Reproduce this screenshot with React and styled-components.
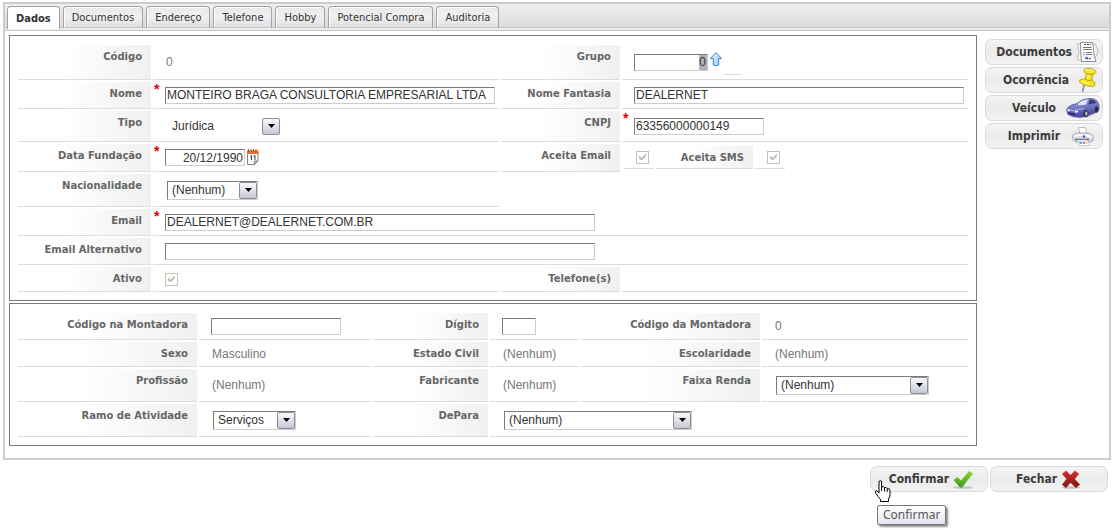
import React, { useState } from "react";
import styled, { createGlobalStyle } from "styled-components";

const GlobalStyle = createGlobalStyle`
  * {
    box-sizing: border-box;
  }
  body {
    margin: 0;
    background-color: white;
    font-family: "Liberation Sans", Arial, sans-serif;
    font-size: 12px;
    color: #333;
  }
`;

const Page = styled.main`
  padding: 2px 2px 38px 3px;
`;

const Window = styled.div`
  border: 2px solid #ccc;
`;

const TabBar = styled.nav`
  display: flex;
  align-items: flex-start;
  gap: 3px;
  height: 27px;
  padding: 2px;
  background: linear-gradient(#efefef, #dadada 23px, #c6c6c6 23px, #c6c6c6 24px, #ececec 24px);
  border-bottom: 1px solid #c6c6c6;
`;

const Tab = styled.button`
  height: ${(props) => (props.$active ? 23 : 22)}px;
  padding: 0 8px;
  border: 1px solid #a2a2a2;
  border-bottom: ${(props) => (props.$active ? "none" : "1px solid #c6c6c6")};
  border-radius: 4px 4px 0 0;
  background: ${(props) =>
    props.$active ? "white" : "linear-gradient(#e9e9e9, #f0f0f0 50%, #e0e0e0)"};
  box-shadow: inset 1px 1px 0 white;
  font-family: "DejaVu Sans Condensed", "DejaVu Sans", sans-serif;
  font-size: 11px;
  font-weight: ${(props) => (props.$active ? "bold" : "normal")};
  color: #333;
  white-space: nowrap;
  cursor: pointer;
`;

const Content = styled.div`
  display: flex;
  gap: 8px;
  padding: 4px 6px 12px 4px;
`;

const Panels = styled.form`
  flex: 1;
  min-width: 0;
  display: flex;
  flex-direction: column;
  gap: 2px;
`;

const Panel = styled.section`
  display: grid;
  grid-template-columns: ${(props) => props.$columns};
  grid-template-rows: ${(props) => props.$rows};
  gap: 2px;
  padding: 9px 8px 8px;
  border: 1px solid #7b7b7b;
`;

const Label = styled.label`
  padding: 5px 9px 0 0;
  border-bottom: 1px solid #dcdcdc;
  background: linear-gradient(to right, white 35%, #f0f0f0);
  font-family: "DejaVu Sans", Verdana, sans-serif;
  font-size: 10px;
  font-weight: bold;
  line-height: 14px;
  text-align: right;
  color: #666;
  white-space: nowrap;
`;

const Value = styled.div`
  display: flex;
  align-items: center;
  grid-column: span ${(props) => props.$span || 1};
  min-width: 0;
  padding-left: ${(props) => (props.$required ? 0 : 12)}px;
  border-bottom: 1px solid #dcdcdc;
`;

const Star = styled.span`
  align-self: flex-start;
  width: 12px;
  padding-left: 1px;
  font-size: 14px;
  font-weight: bold;
  line-height: 14px;
  color: #e00000;
`;

const Blank = styled.div`
  grid-column: span 2;
`;

const ReadOnly = styled.output`
  padding-left: 1px;
  color: #777;
`;

const TextInput = styled.input`
  width: ${(props) => props.$width}px;
  max-width: 100%;
  height: 17px;
  padding: 0 1px;
  border: 1px solid #ccc;
  border-top-color: #7b7b7b;
  border-left-color: #7b7b7b;
  border-radius: 0;
  outline: none;
  background: white;
  font-family: inherit;
  font-size: 12px;
  color: #333;
  text-align: ${(props) => props.$align || "left"};
`;

const GroupInput = styled(TextInput)`
  background: linear-gradient(#b1b1bf, #b1b1bf) right center / 8px 15px no-repeat white;
`;

const SelectBox = styled.span`
  display: grid;
  grid-template-columns: 1fr 18px;
  align-items: center;
  width: ${(props) => props.$width}px;
  height: 19px;
  margin-left: 2px;
  border: 1px solid ${(props) => (props.$plain ? "transparent" : "#ccc")};
  border-top-color: ${(props) => (props.$plain ? "transparent" : "#7b7b7b")};
  border-left-color: ${(props) => (props.$plain ? "transparent" : "#7b7b7b")};
`;

const NativeSelect = styled.select`
  grid-area: 1 / 1 / 2 / 3;
  height: 17px;
  padding: 0 18px 0 4px;
  border: none;
  outline: none;
  appearance: none;
  background: transparent;
  font-family: inherit;
  font-size: 12px;
  color: #333;
`;

const ArrowBox = styled.span`
  grid-area: 1 / 2 / 2 / 3;
  display: flex;
  justify-content: center;
  align-items: center;
  height: 17px;
  border: 1px solid #8d8d93;
  border-radius: 2px;
  background: linear-gradient(#fafafc, #c5c7d6);
  pointer-events: none;
`;

const Check = styled.input`
  display: grid;
  place-content: center;
  width: 13px;
  height: 13px;
  margin: 0;
  border: 1px solid #c5c3b8;
  appearance: none;
  background: white;
  &:checked::after {
    content: "";
    width: 7px;
    height: 7px;
    background-color: #c0beb2;
    clip-path: polygon(0 30%, 38% 62%, 100% 0, 100% 40%, 38% 100%, 0 70%);
  }
`;

const InnerCells = styled.div`
  display: grid;
  grid-template-columns: 30px 97px 30px;
  gap: 2px;
  padding: 2px 2px 3px;
`;

const Placeholder = styled.span`
  align-self: flex-end;
  width: 19px;
  height: 1px;
  margin: 0 0 4px 1px;
  background-color: #dcdcdc;
`;

const Sidebar = styled.aside`
  display: flex;
  flex-direction: column;
  gap: 2px;
  width: 118px;
  padding-top: 4px;
`;

const ActionButton = styled.button`
  display: flex;
  justify-content: flex-end;
  align-items: center;
  width: 118px;
  height: 26px;
  padding: 0 2px 0 0;
  border: 1px solid #dadada;
  border-radius: 7px;
  background: linear-gradient(#f5f5f5, #ebebeb 45%, #f2f2f2);
  font-family: "DejaVu Sans Condensed", "DejaVu Sans", sans-serif;
  font-size: 12px;
  font-weight: bold;
  color: #3b3b3b;
  cursor: pointer;
  svg {
    flex: none;
  }
`;

const Footer = styled.footer`
  display: flex;
  justify-content: flex-end;
  gap: 2px;
  padding: 6px 3px 0 0;
`;

const TipAnchor = styled.div`
  position: relative;
`;

const Tooltip = styled.span`
  position: absolute;
  top: 39px;
  left: 7px;
  height: 20px;
  padding: 0 5px;
  border: 1px solid #767676;
  border-radius: 2px;
  background: linear-gradient(white, #e4e5f0);
  box-shadow: 2px 2px 2px rgba(0, 0, 0, 0.45);
  font-family: "Noto Sans", sans-serif;
  font-size: 12px;
  line-height: 18px;
  color: #575757;
`;

const Hand = styled.svg`
  position: absolute;
  top: 14px;
  left: 4px;
  z-index: 1;
`;

const UpArrow = () => (
  <svg width="14" height="22" viewBox="0 0 14 22">
    <defs>
      <linearGradient id="up" x2="1" y2="1">
        <stop offset="0" stopColor="#eaf7ff" />
        <stop offset="1" stopColor="#8cc8f4" />
      </linearGradient>
    </defs>
    <path
      d="M8 1.5 L13.5 7.5 H10.7 V14 Q8 15.5 5.3 14 V7.5 H2.5 Z"
      fill="url(#up)"
      stroke="#3b86cf"
      strokeLinejoin="round"
    />
  </svg>
);

const CalendarIcon = () => (
  <svg width="14" height="17" viewBox="0 0 14 17">
    <path d="M2.5 3 H13 V12 L9.5 15.5 H2.5 Z" fill="#fbfaf8" stroke="#8b8580" />
    <path d="M9.5 15.5 V12 H13 Z" fill="#c9c5c0" stroke="#8b8580" />
    <path d="M2 1.5 H13.5 V5 H2 Z" fill="#e0702c" />
    <path d="M3.5 0 V3 M6 0 V3 M8.5 0 V3 M11 0 V3" stroke="#a8502a" />
    <path d="M5 7.5 L6.5 6.5 V11 M8.500 7.5 L10 6.5 V11" fill="none" stroke="#454545" />
  </svg>
);

const DocumentIcon = () => (
  <svg width="28" height="24" viewBox="0 0 28 24">
    <path d="M9 4 L5.5 3.5 L7 12 L5 19 L9 21 M21 4 L23.500 4.5 L26 11 L23 18" fill="#f6f6f6" stroke="#bcbcbc" />
    <path d="M8.5 2.5 H20.5 Q21.500 6 21.500 11 Q22 17 24 21.5 H9.5 Q8.500 12 8.5 2.5 Z" fill="white" stroke="#8f8f8f" />
    <path d="M12 4.5 H19" stroke="#444" strokeDasharray="2 1" />
    <path d="M11 7.5 H19.5 M11 9.5 H20 M14 12.5 H20 M14 14.5 H20.500" stroke="#777" />
    <path d="M11 12.5 H13 M11 14.5 H13" stroke="#aaa" />
    <path d="M13 18.5 L15 17.5 L16 19.500 M17 18.5 H19" fill="none" stroke="#4a67cc" strokeWidth="1.5" />
  </svg>
);

const PinIcon = () => (
  <svg width="31" height="26" viewBox="0 0 31 26">
    <path d="M15 18 L13.5 25" stroke="#888" strokeWidth="1.5" />
    <path
      d="M14.5 3.5 Q15 1 21 1.5 Q27.5 2.5 27 5.5 Q26 7.5 23.5 7 L23 13 Q27 15.5 26 18 Q24 20.5 17 18.5 Q9.500 16 10.5 13.5 Q12.5 11.5 16 12 L17.5 6.5 Q14.5 5.5 14.5 3.5 Z"
      fill="#f7e51c"
      stroke="#a99a10"
      strokeWidth="0.8"
    />
    <path d="M17.5 6.5 Q20 8 23.5 7 M16 12 Q18.5 14.5 23 13" fill="none" stroke="#b0a112" />
    <path d="M17 3 Q20 2 24 4 M19.5 8 L18.5 12 M13 14 Q16 16 21 17" fill="none" stroke="#fffb9e" />
  </svg>
);

const CarIcon = () => (
  <svg width="44" height="24" viewBox="0 0 44 24">
    <defs>
      <linearGradient id="car" x2="0.3" y2="1">
        <stop offset="0" stopColor="#aab0ea" />
        <stop offset="1" stopColor="#4646a4" />
      </linearGradient>
    </defs>
    <path d="M14 20 Q24 24 33 21 L43 16 L41 13 Z" fill="#c9c9c9" />
    <path
      d="M11 12.5 Q14 8.5 21 7.5 Q26 2.5 33 2.5 Q39 2 41 5 L43 9 V14 Q41 16.5 38 17 L32 19.5 Q25 22.5 17 20.5 L12 18.5 Q10 15 11 12.5 Z"
      fill="url(#car)"
      stroke="#49499b"
      strokeWidth="0.7"
    />
    <path d="M22 7.5 Q27 3.5 32 3.5 L30 8.5 Q26 9.5 22 9 Z" fill="#dfe3f8" />
    <path d="M33.5 3.5 Q38 3 39.5 5.5 L40 7 L32.5 8.5 Z" fill="#3c3f70" />
    <path d="M12 13 L17 15 Q23 13 28 12.5" fill="none" stroke="#bdc2f4" />
    <ellipse cx="30" cy="17.5" rx="2.5" ry="3.5" fill="#2b2b38" />
    <ellipse cx="30.3" cy="17.5" rx="1.3" ry="2.2" fill="#b4b4c0" />
    <ellipse cx="40.5" cy="13.5" rx="1.7" ry="3" fill="#2b2b38" />
    <path d="M12 17 L19 18.5" stroke="#24245f" strokeWidth="1.5" />
    <path d="M11.5 14.5 H13.5 M19 16 L22 15.5" stroke="white" strokeWidth="1.5" />
  </svg>
);

const PrinterIcon = () => (
  <svg width="40" height="24" viewBox="0 0 40 24">
    <path d="M20 10 L18.5 3.5 H25.5 L27 10 Z" fill="white" stroke="#b9bcc6" />
    <path d="M13 11 Q16 8.500 20 9 L29 9 L33 12 V16.5 L30 18 H16 L12.5 15 Z" fill="#d9dbe6" stroke="#a3a6b8" />
    <path d="M14 12 Q22 9.500 32 13" fill="none" stroke="white" strokeWidth="2" />
    <path d="M15 15.5 H29" stroke="#5e6274" strokeWidth="1.5" />
    <circle cx="24" cy="12.5" r="1.2" fill="#3f4ba6" />
    <path d="M17 16 H27 L30 21.5 H19 Z" fill="white" stroke="#bbb" strokeWidth="0.7" />
    <path d="M18.5 17.5 H21.5 L22.5 20 H20 Z" fill="#44b9dd" />
    <path d="M22.5 17.5 H24.5 L25.5 20 H23.5 Z" fill="#dd58b8" />
    <path d="M25.5 17.5 H26.5 L28 20 H26.5 Z" fill="#e8c93a" />
  </svg>
);

const ConfirmIcon = () => (
  <svg width="36" height="24" viewBox="0 0 36 24">
    <defs>
      <linearGradient id="ok" x2="0" y2="1">
        <stop offset="0" stopColor="#8fd63a" />
        <stop offset="1" stopColor="#3c9a18" />
      </linearGradient>
    </defs>
    <ellipse cx="14" cy="20.5" rx="10" ry="1.3" fill="#c4c4c4" />
    <path d="M4.5 13 L8.5 10 L12 13.5 L20 4 L24 6.5 L13 20.5 H11 Z" fill="url(#ok)" />
  </svg>
);

const CloseIcon = () => (
  <svg width="48" height="24" viewBox="0 0 48 24">
    <defs>
      <linearGradient id="no" x2="0" y2="1">
        <stop offset="0" stopColor="#d8322c" />
        <stop offset="1" stopColor="#7e1714" />
      </linearGradient>
    </defs>
    <ellipse cx="14" cy="20.5" rx="9" ry="1.3" fill="#c9c0c0" />
    <path
      d="M5 7 L9 3.5 L13.5 8 L18 3.5 L22 7 L17.8 12 L23 17.5 L19 21 L13.5 15.8 L9 21 L5 17.5 L9.5 12 Z"
      fill="url(#no)"
    />
  </svg>
);

const Select = ({ id, width, value, plain }) => (
  <SelectBox $width={width} $plain={plain}>
    <NativeSelect id={id} defaultValue={value}>
      <option>{value}</option>
    </NativeSelect>
    <ArrowBox>
      <svg width="7" height="4" viewBox="0 0 7 4">
        <path d="M0 0 H7 L3.5 4 Z" fill="black" />
      </svg>
    </ArrowBox>
  </SelectBox>
);

const Field = ({ id, label, required, span, children }) => (
  <>
    <Label htmlFor={id}>{label}</Label>
    <Value $required={required} $span={span}>
      {required && <Star>*</Star>}
      {children}
    </Value>
  </>
);

const tabs = [
  "Dados",
  "Documentos",
  "Endereço",
  "Telefone",
  "Hobby",
  "Potencial Compra",
  "Auditoria",
];

const App = () => {
  const [active, setActive] = useState("Dados");

  return (
    <Page>
      <GlobalStyle />
      <Window>
        <TabBar>
          {tabs.map((tab) => (
            <Tab key={tab} $active={tab === active} onClick={() => setActive(tab)}>
              {tab}
            </Tab>
          ))}
        </TabBar>
        <Content>
          <Panels>
            <Panel
              $columns="133px minmax(0, 1fr) 119px minmax(0, 1fr)"
              $rows="35px 27px 31px 28px 33px 27px 27px 25px"
            >
              <Field id="codigo" label="Código">
                <ReadOnly id="codigo">0</ReadOnly>
              </Field>
              <Field id="grupo" label="Grupo">
                <GroupInput id="grupo" $width={74} $align="right" defaultValue="0" />
                <UpArrow />
                <Placeholder />
              </Field>
              <Field id="nome" label="Nome" required>
                <TextInput
                  id="nome"
                  $width={330}
                  defaultValue="MONTEIRO BRAGA CONSULTORIA EMPRESARIAL LTDA"
                />
              </Field>
              <Field id="fantasia" label="Nome Fantasia">
                <TextInput id="fantasia" $width={330} defaultValue="DEALERNET" />
              </Field>
              <Field id="tipo" label="Tipo">
                <Select id="tipo" width={114} value="Jurídica" plain />
              </Field>
              <Field id="cnpj" label="CNPJ" required>
                <TextInput id="cnpj" $width={130} defaultValue="63356000000149" />
              </Field>
              <Field id="fundacao" label="Data Fundação" required>
                <TextInput id="fundacao" $width={80} $align="right" defaultValue="20/12/1990" />
                <CalendarIcon />
              </Field>
              <Label htmlFor="aceitaEmail">Aceita Email</Label>
              <InnerCells>
                <Value>
                  <Check type="checkbox" id="aceitaEmail" defaultChecked disabled />
                </Value>
                <Label htmlFor="aceitaSms">Aceita SMS</Label>
                <Value>
                  <Check type="checkbox" id="aceitaSms" defaultChecked disabled />
                </Value>
              </InnerCells>
              <Field id="nacionalidade" label="Nacionalidade">
                <Select id="nacionalidade" width={91} value="(Nenhum)" />
              </Field>
              <Blank />
              <Field id="email" label="Email" required span={3}>
                <TextInput id="email" $width={430} defaultValue="DEALERNET@DEALERNET.COM.BR" />
              </Field>
              <Field id="emailAlternativo" label="Email Alternativo" span={3}>
                <TextInput id="emailAlternativo" $width={430} />
              </Field>
              <Field id="ativo" label="Ativo">
                <Check type="checkbox" id="ativo" defaultChecked disabled />
              </Field>
              <Field id="telefones" label="Telefone(s)">
                <ReadOnly id="telefones" />
              </Field>
            </Panel>
            <Panel
              $columns="179px minmax(0, 171fr) 116px minmax(0, 88fr) 180px minmax(0, 206fr)"
              $rows="27px 25px 33px 33px"
            >
              <Field id="codigoNaMontadora" label="Código na Montadora">
                <TextInput id="codigoNaMontadora" $width={130} />
              </Field>
              <Field id="digito" label="Dígito">
                <TextInput id="digito" $width={34} />
              </Field>
              <Field id="codigoDaMontadora" label="Código da Montadora">
                <ReadOnly id="codigoDaMontadora">0</ReadOnly>
              </Field>
              <Field id="sexo" label="Sexo">
                <ReadOnly id="sexo">Masculino</ReadOnly>
              </Field>
              <Field id="estadoCivil" label="Estado Civil">
                <ReadOnly id="estadoCivil">(Nenhum)</ReadOnly>
              </Field>
              <Field id="escolaridade" label="Escolaridade">
                <ReadOnly id="escolaridade">(Nenhum)</ReadOnly>
              </Field>
              <Field id="profissao" label="Profissão">
                <ReadOnly id="profissao">(Nenhum)</ReadOnly>
              </Field>
              <Field id="fabricante" label="Fabricante">
                <ReadOnly id="fabricante">(Nenhum)</ReadOnly>
              </Field>
              <Field id="faixaRenda" label="Faixa Renda">
                <Select id="faixaRenda" width={153} value="(Nenhum)" />
              </Field>
              <Field id="ramo" label="Ramo de Atividade">
                <Select id="ramo" width={83} value="Serviços" />
              </Field>
              <Field id="dePara" label="DePara" span={3}>
                <Select id="dePara" width={188} value="(Nenhum)" />
              </Field>
            </Panel>
          </Panels>
          <Sidebar>
            <ActionButton>
              Documentos
              <DocumentIcon />
            </ActionButton>
            <ActionButton>
              Ocorrência
              <PinIcon />
            </ActionButton>
            <ActionButton>
              Veículo
              <CarIcon />
            </ActionButton>
            <ActionButton>
              Imprimir
              <PrinterIcon />
            </ActionButton>
          </Sidebar>
        </Content>
      </Window>
      <Footer>
        <TipAnchor>
          <ActionButton aria-describedby="dica">
            Confirmar
            <ConfirmIcon />
          </ActionButton>
          <Hand width="18" height="23" viewBox="0 0 18 23">
            <path
              d="M5 2 Q5 0.7 6.3 0.7 Q7.6 0.7 7.6 2 V7 Q10 5.8 10.5 7.7 Q12.7 6.8 13.2 8.7 Q15.8 8 16 10.5 V15 Q16 17 14.5 19 V21.5 H6.5 V19.5 Q4 16.5 2 13.5 Q0.5 11.5 2 10.7 Q3.5 10.5 5 13 Z"
              fill="white"
              stroke="black"
            />
            <path d="M7.6 7 V11 M10.5 8 V11.5 M13.2 9 V12" stroke="black" />
          </Hand>
          <Tooltip id="dica" role="tooltip">
            Confirmar
          </Tooltip>
        </TipAnchor>
        <ActionButton>
          Fechar
          <CloseIcon />
        </ActionButton>
      </Footer>
    </Page>
  );
};

export default App;
